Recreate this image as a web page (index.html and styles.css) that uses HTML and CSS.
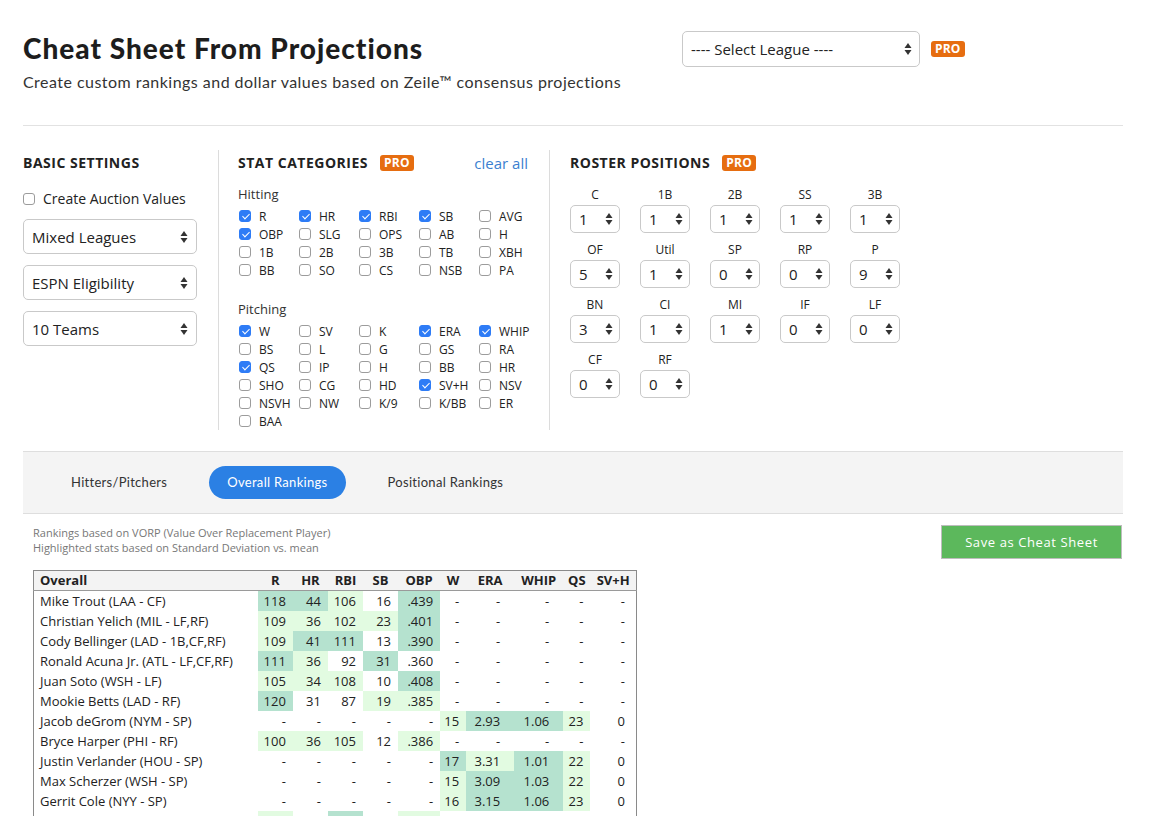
FILE: index.html
```html
<!DOCTYPE html>
<html lang="en">
<head>
<meta charset="utf-8">
<title>Cheat Sheet From Projections</title>
<link rel="stylesheet" href="styles.css">
</head>
<body>
<div class="page">
  <header class="top">
    <div class="titles">
      <h1>Cheat Sheet From Projections</h1>
      <p class="sub">Create custom rankings and dollar values based on Zeile™ consensus projections</p>
    </div>
    <div class="league">
      <div class="select select-league"><span>---- Select League ----</span><svg class="arr" viewBox="0 0 8 14"><polygon points="0.5,6 4,1 7.5,6"/><polygon points="0.5,8 4,13 7.5,8"/></svg></div>
      <span class="pro">PRO</span>
    </div>
  </header>

  <section class="settings">
    <div class="col col-basic">
      <h2>BASIC SETTINGS</h2>
      <label class="auction"><span class="cb"></span>Create Auction Values</label>
      <div class="select select-basic"><span>Mixed Leagues</span><svg class="arr" viewBox="0 0 8 14"><polygon points="0.5,6 4,1 7.5,6"/><polygon points="0.5,8 4,13 7.5,8"/></svg></div>
      <div class="select select-basic"><span>ESPN Eligibility</span><svg class="arr" viewBox="0 0 8 14"><polygon points="0.5,6 4,1 7.5,6"/><polygon points="0.5,8 4,13 7.5,8"/></svg></div>
      <div class="select select-basic"><span>10 Teams</span><svg class="arr" viewBox="0 0 8 14"><polygon points="0.5,6 4,1 7.5,6"/><polygon points="0.5,8 4,13 7.5,8"/></svg></div>
    </div>

    <div class="col col-stats">
      <div class="head-row">
        <h2>STAT CATEGORIES <span class="pro">PRO</span></h2>
        <a class="clear">clear all</a>
      </div>
      <div class="group-label">Hitting</div>
      <div class="stat-grid">
        <label><span class="cb on"></span>R</label>
        <label><span class="cb on"></span>HR</label>
        <label><span class="cb on"></span>RBI</label>
        <label><span class="cb on"></span>SB</label>
        <label><span class="cb"></span>AVG</label>
        <label><span class="cb on"></span>OBP</label>
        <label><span class="cb"></span>SLG</label>
        <label><span class="cb"></span>OPS</label>
        <label><span class="cb"></span>AB</label>
        <label><span class="cb"></span>H</label>
        <label><span class="cb"></span>1B</label>
        <label><span class="cb"></span>2B</label>
        <label><span class="cb"></span>3B</label>
        <label><span class="cb"></span>TB</label>
        <label><span class="cb"></span>XBH</label>
        <label><span class="cb"></span>BB</label>
        <label><span class="cb"></span>SO</label>
        <label><span class="cb"></span>CS</label>
        <label><span class="cb"></span>NSB</label>
        <label><span class="cb"></span>PA</label>
      </div>
      <div class="group-label pitching">Pitching</div>
      <div class="stat-grid">
        <label><span class="cb on"></span>W</label>
        <label><span class="cb"></span>SV</label>
        <label><span class="cb"></span>K</label>
        <label><span class="cb on"></span>ERA</label>
        <label><span class="cb on"></span>WHIP</label>
        <label><span class="cb"></span>BS</label>
        <label><span class="cb"></span>L</label>
        <label><span class="cb"></span>G</label>
        <label><span class="cb"></span>GS</label>
        <label><span class="cb"></span>RA</label>
        <label><span class="cb on"></span>QS</label>
        <label><span class="cb"></span>IP</label>
        <label><span class="cb"></span>H</label>
        <label><span class="cb"></span>BB</label>
        <label><span class="cb"></span>HR</label>
        <label><span class="cb"></span>SHO</label>
        <label><span class="cb"></span>CG</label>
        <label><span class="cb"></span>HD</label>
        <label><span class="cb on"></span>SV+H</label>
        <label><span class="cb"></span>NSV</label>
        <label><span class="cb"></span>NSVH</label>
        <label><span class="cb"></span>NW</label>
        <label><span class="cb"></span>K/9</label>
        <label><span class="cb"></span>K/BB</label>
        <label><span class="cb"></span>ER</label>
        <label><span class="cb"></span>BAA</label>
      </div>
    </div>

    <div class="col col-roster">
      <h2>ROSTER POSITIONS <span class="pro">PRO</span></h2>
      <div class="roster-grid">
        <div class="pos"><div class="pos-label">C</div><div class="select select-num"><span>1</span><svg class="arr" viewBox="0 0 8 14"><polygon points="0.5,6 4,1 7.5,6"/><polygon points="0.5,8 4,13 7.5,8"/></svg></div></div>
        <div class="pos"><div class="pos-label">1B</div><div class="select select-num"><span>1</span><svg class="arr" viewBox="0 0 8 14"><polygon points="0.5,6 4,1 7.5,6"/><polygon points="0.5,8 4,13 7.5,8"/></svg></div></div>
        <div class="pos"><div class="pos-label">2B</div><div class="select select-num"><span>1</span><svg class="arr" viewBox="0 0 8 14"><polygon points="0.5,6 4,1 7.5,6"/><polygon points="0.5,8 4,13 7.5,8"/></svg></div></div>
        <div class="pos"><div class="pos-label">SS</div><div class="select select-num"><span>1</span><svg class="arr" viewBox="0 0 8 14"><polygon points="0.5,6 4,1 7.5,6"/><polygon points="0.5,8 4,13 7.5,8"/></svg></div></div>
        <div class="pos"><div class="pos-label">3B</div><div class="select select-num"><span>1</span><svg class="arr" viewBox="0 0 8 14"><polygon points="0.5,6 4,1 7.5,6"/><polygon points="0.5,8 4,13 7.5,8"/></svg></div></div>
        <div class="pos"><div class="pos-label">OF</div><div class="select select-num"><span>5</span><svg class="arr" viewBox="0 0 8 14"><polygon points="0.5,6 4,1 7.5,6"/><polygon points="0.5,8 4,13 7.5,8"/></svg></div></div>
        <div class="pos"><div class="pos-label">Util</div><div class="select select-num"><span>1</span><svg class="arr" viewBox="0 0 8 14"><polygon points="0.5,6 4,1 7.5,6"/><polygon points="0.5,8 4,13 7.5,8"/></svg></div></div>
        <div class="pos"><div class="pos-label">SP</div><div class="select select-num"><span>0</span><svg class="arr" viewBox="0 0 8 14"><polygon points="0.5,6 4,1 7.5,6"/><polygon points="0.5,8 4,13 7.5,8"/></svg></div></div>
        <div class="pos"><div class="pos-label">RP</div><div class="select select-num"><span>0</span><svg class="arr" viewBox="0 0 8 14"><polygon points="0.5,6 4,1 7.5,6"/><polygon points="0.5,8 4,13 7.5,8"/></svg></div></div>
        <div class="pos"><div class="pos-label">P</div><div class="select select-num"><span>9</span><svg class="arr" viewBox="0 0 8 14"><polygon points="0.5,6 4,1 7.5,6"/><polygon points="0.5,8 4,13 7.5,8"/></svg></div></div>
        <div class="pos"><div class="pos-label">BN</div><div class="select select-num"><span>3</span><svg class="arr" viewBox="0 0 8 14"><polygon points="0.5,6 4,1 7.5,6"/><polygon points="0.5,8 4,13 7.5,8"/></svg></div></div>
        <div class="pos"><div class="pos-label">CI</div><div class="select select-num"><span>1</span><svg class="arr" viewBox="0 0 8 14"><polygon points="0.5,6 4,1 7.5,6"/><polygon points="0.5,8 4,13 7.5,8"/></svg></div></div>
        <div class="pos"><div class="pos-label">MI</div><div class="select select-num"><span>1</span><svg class="arr" viewBox="0 0 8 14"><polygon points="0.5,6 4,1 7.5,6"/><polygon points="0.5,8 4,13 7.5,8"/></svg></div></div>
        <div class="pos"><div class="pos-label">IF</div><div class="select select-num"><span>0</span><svg class="arr" viewBox="0 0 8 14"><polygon points="0.5,6 4,1 7.5,6"/><polygon points="0.5,8 4,13 7.5,8"/></svg></div></div>
        <div class="pos"><div class="pos-label">LF</div><div class="select select-num"><span>0</span><svg class="arr" viewBox="0 0 8 14"><polygon points="0.5,6 4,1 7.5,6"/><polygon points="0.5,8 4,13 7.5,8"/></svg></div></div>
        <div class="pos"><div class="pos-label">CF</div><div class="select select-num"><span>0</span><svg class="arr" viewBox="0 0 8 14"><polygon points="0.5,6 4,1 7.5,6"/><polygon points="0.5,8 4,13 7.5,8"/></svg></div></div>
        <div class="pos"><div class="pos-label">RF</div><div class="select select-num"><span>0</span><svg class="arr" viewBox="0 0 8 14"><polygon points="0.5,6 4,1 7.5,6"/><polygon points="0.5,8 4,13 7.5,8"/></svg></div></div>
      </div>
    </div>
  </section>

  <section class="rankings">
    <nav class="tabs">
      <span class="tab">Hitters/Pitchers</span>
      <span class="tab active">Overall Rankings</span>
      <span class="tab">Positional Rankings</span>
    </nav>
    <div class="meta">
      <div class="notes">
        <div>Rankings based on VORP (Value Over Replacement Player)</div>
        <div>Highlighted stats based on Standard Deviation vs. mean</div>
      </div>
      <button class="save">Save as Cheat Sheet</button>
    </div>

    <table class="ranks">
      <colgroup>
        <col class="c-name"><col class="c-r"><col class="c-hr"><col class="c-rbi"><col class="c-sb"><col class="c-obp"><col class="c-w"><col class="c-era"><col class="c-whip"><col class="c-qs"><col class="c-svh">
      </colgroup>
      <thead>
        <tr><th class="name">Overall</th><th>R</th><th>HR</th><th>RBI</th><th>SB</th><th>OBP</th><th>W</th><th>ERA</th><th>WHIP</th><th>QS</th><th>SV+H</th></tr>
      </thead>
      <tbody>
        <tr><td class="name">Mike Trout (LAA - CF)</td><td class="hi">118</td><td class="hi">44</td><td class="lo">106</td><td>16</td><td class="hi">.439</td><td>-</td><td class="wide">-</td><td class="wide">-</td><td>-</td><td class="last">-</td></tr>
        <tr><td class="name">Christian Yelich (MIL - LF,RF)</td><td class="lo">109</td><td class="lo">36</td><td class="lo">102</td><td class="lo">23</td><td class="hi">.401</td><td>-</td><td class="wide">-</td><td class="wide">-</td><td>-</td><td class="last">-</td></tr>
        <tr><td class="name">Cody Bellinger (LAD - 1B,CF,RF)</td><td class="lo">109</td><td class="hi">41</td><td class="hi">111</td><td>13</td><td class="hi">.390</td><td>-</td><td class="wide">-</td><td class="wide">-</td><td>-</td><td class="last">-</td></tr>
        <tr><td class="name">Ronald Acuna Jr. (ATL - LF,CF,RF)</td><td class="hi">111</td><td class="lo">36</td><td>92</td><td class="hi">31</td><td>.360</td><td>-</td><td class="wide">-</td><td class="wide">-</td><td>-</td><td class="last">-</td></tr>
        <tr><td class="name">Juan Soto (WSH - LF)</td><td class="lo">105</td><td class="lo">34</td><td class="lo">108</td><td>10</td><td class="hi">.408</td><td>-</td><td class="wide">-</td><td class="wide">-</td><td>-</td><td class="last">-</td></tr>
        <tr><td class="name">Mookie Betts (LAD - RF)</td><td class="hi">120</td><td>31</td><td>87</td><td class="lo">19</td><td class="lo">.385</td><td>-</td><td class="wide">-</td><td class="wide">-</td><td>-</td><td class="last">-</td></tr>
        <tr><td class="name">Jacob deGrom (NYM - SP)</td><td>-</td><td>-</td><td>-</td><td>-</td><td>-</td><td class="lo">15</td><td class="hi wide">2.93</td><td class="hi wide">1.06</td><td class="lo">23</td><td class="last">0</td></tr>
        <tr><td class="name">Bryce Harper (PHI - RF)</td><td class="lo">100</td><td class="lo">36</td><td class="lo">105</td><td>12</td><td class="lo">.386</td><td>-</td><td class="wide">-</td><td class="wide">-</td><td>-</td><td class="last">-</td></tr>
        <tr><td class="name">Justin Verlander (HOU - SP)</td><td>-</td><td>-</td><td>-</td><td>-</td><td>-</td><td class="hi">17</td><td class="lo wide">3.31</td><td class="hi wide">1.01</td><td class="lo">22</td><td class="last">0</td></tr>
        <tr><td class="name">Max Scherzer (WSH - SP)</td><td>-</td><td>-</td><td>-</td><td>-</td><td>-</td><td class="lo">15</td><td class="hi wide">3.09</td><td class="hi wide">1.03</td><td class="lo">22</td><td class="last">0</td></tr>
        <tr><td class="name">Gerrit Cole (NYY - SP)</td><td>-</td><td>-</td><td>-</td><td>-</td><td>-</td><td class="lo">16</td><td class="hi wide">3.15</td><td class="hi wide">1.06</td><td class="lo">23</td><td class="last">0</td></tr>
        <tr><td class="name">Nolan Arenado (COL - 3B)</td><td class="lo">102</td><td>41</td><td class="hi">118</td><td>3</td><td class="lo">.379</td><td>-</td><td class="wide">-</td><td class="wide">-</td><td>-</td><td class="last">-</td></tr>
      </tbody>
    </table>
  </section>
</div>
</body>
</html>
```

FILE: styles.css
```css
* { box-sizing: border-box; }

body {
  margin: 0;
  background: #fff;
  color: #222;
  font-family: "Open Sans", "Liberation Sans", sans-serif;
}

.page {
  width: 1100px;
  margin-left: 23px;
}

/* ---------- header ---------- */
.top {
  display: flex;
  align-items: flex-start;
  height: 126px;
  border-bottom: 1px solid #e2e2e2;
}

.titles {
  width: 659px;
  padding-top: 31px;
}

h1 {
  margin: 0;
  font: 900 28px/34px "Lato", sans-serif;
  color: #1d1d1d;
  letter-spacing: 1px;
}

.sub {
  margin: 7px 0 0;
  font: 400 16px/20px "Lato", sans-serif;
  color: #333;
  letter-spacing: 0.47px;
}

.league {
  display: flex;
  align-items: center;
  margin-top: 31px;
}

.select {
  display: flex;
  align-items: center;
  justify-content: space-between;
  border: 1px solid #c9c9c9;
  border-radius: 5px;
  background: #fff;
  color: #222;
}

.arr {
  width: 8px;
  height: 14px;
  fill: #333;
  flex: none;
}

.select-league {
  width: 238px;
  height: 36px;
  padding: 0 7px 0 8px;
  font-size: 15px;
}

.pro {
  display: inline-block;
  background: #e66d10;
  color: #fff;
  font: 700 12px/16px "Open Sans", sans-serif;
  padding: 0 4px;
  border-radius: 3px;
  letter-spacing: 0.2px;
}

.league .pro {
  margin-left: 11px;
}

/* ---------- settings ---------- */
.settings {
  display: flex;
  padding-top: 24px;
}

.col {
  padding-top: 3px;
}

h2 {
  margin: 0;
  font: 700 14px/20px "Open Sans", sans-serif;
  color: #222;
  letter-spacing: 0.5px;
}

h2 .pro {
  margin-left: 8px;
  vertical-align: 1px;
  letter-spacing: 0.2px;
}

.col-basic {
  width: 196px;
  border-right: 1px solid #dcdcdc;
}

.auction {
  display: flex;
  align-items: center;
  margin-top: 16px;
  font-size: 14px;
  line-height: 20px;
  color: #222;
}

.auction .cb {
  margin: 0 8px 0 0;
}

.select-basic {
  width: 174px;
  height: 35px;
  margin-top: 11px;
  padding: 0 8px 0 8px;
  font-size: 15px;
}

.auction + .select-basic {
  margin-top: 10px;
}

.col-stats {
  width: 331px;
  padding-left: 19px;
  padding-right: 21px;
  border-right: 1px solid #dcdcdc;
}

.head-row {
  display: flex;
  justify-content: space-between;
  align-items: center;
}

.clear {
  color: #3b7fd0;
  font-size: 15px;
  line-height: 20px;
  cursor: pointer;
}

.group-label {
  margin-top: 12px;
  font-size: 13px;
  line-height: 18px;
  color: #333;
}

.group-label.pitching {
  margin-top: 21px;
}

.stat-grid {
  display: grid;
  grid-template-columns: repeat(5, 60px);
  grid-auto-rows: 18px;
  margin-top: 4px;
}

.stat-grid label {
  display: flex;
  align-items: center;
  font-size: 12px;
  color: #222;
  white-space: nowrap;
}

.cb {
  position: relative;
  display: inline-block;
  flex: none;
  width: 12px;
  height: 12px;
  border: 1px solid #9c9c9c;
  border-radius: 3px;
  background: #fff;
  margin: 0 8px 0 1px;
}

.cb.on {
  background: #2e7cf6;
  border-color: #2e7cf6;
}

.cb.on::after {
  content: "";
  position: absolute;
  left: 3.5px;
  top: 1px;
  width: 3px;
  height: 6px;
  border-right: 1.6px solid #fff;
  border-bottom: 1.6px solid #fff;
  transform: rotate(45deg);
}

.col-roster {
  padding-left: 20px;
}

.roster-grid {
  display: grid;
  grid-template-columns: repeat(5, 50px);
  column-gap: 20px;
  row-gap: 9px;
  margin-top: 14px;
}

.pos-label {
  text-align: center;
  font-size: 12px;
  line-height: 16px;
  color: #222;
}

.select-num {
  margin-top: 2px;
  width: 50px;
  height: 28px;
  padding: 0 6px 0 8px;
  font-size: 15px;
}

/* ---------- rankings ---------- */
.tabs {
  margin-top: 21px;
  height: 63px;
  display: flex;
  align-items: center;
  gap: 24px;
  padding-left: 30px;
  background: #f4f4f4;
  border-top: 1px solid #dedede;
  border-bottom: 1px solid #dedede;
}

.tab {
  height: 33px;
  padding: 0 18px;
  border-radius: 17px;
  font: 400 13px/33px "Lato", sans-serif;
  color: #333;
  letter-spacing: 0.3px;
}

.tab.active {
  background: #2b80e4;
  color: #fff;
}

.meta {
  display: flex;
  justify-content: space-between;
  align-items: flex-start;
  padding-top: 11px;
}

.notes {
  padding-left: 10px;
  font-size: 11px;
  line-height: 15px;
  color: #777;
}

.save {
  width: 181px;
  height: 34px;
  margin-right: 1px;
  background: #5cb85c;
  border: 1px solid #bdbdbd;
  color: #fff;
  font: 400 13px "Open Sans", sans-serif;
  letter-spacing: 0.6px;
}

.ranks {
  margin: 11px 0 0 10px;
  border-collapse: collapse;
  table-layout: fixed;
  width: 604px;
  border: 1px solid #8a8a8a;
  font-size: 13px;
  color: #222;
}

.c-name { width: 224px; }
.c-r, .c-hr, .c-rbi, .c-sb { width: 35px; }
.c-obp { width: 42px; }
.c-w { width: 26px; }
.c-era { width: 48px; }
.c-whip { width: 49px; }
.c-qs { width: 27px; }
.c-svh { width: 46px; }

.ranks th {
  height: 20px;
  padding: 0;
  background: #f3f3f3;
  border-bottom: 1px solid #9a9a9a;
  font-weight: 700;
  text-align: center;
  line-height: 19px;
  white-space: nowrap;
}

.ranks td {
  height: 20px;
  padding: 0 7px 0 0;
  line-height: 20px;
  text-align: right;
  white-space: nowrap;
}

.ranks th.name,
.ranks td.name {
  text-align: left;
  padding-left: 6px;
}

.ranks td.wide { padding-right: 14px; }
.ranks td.last { padding-right: 11px; }

.ranks td.hi { background: #b5e2cf; }
.ranks td.lo { background: #e2fbe1; }
```
